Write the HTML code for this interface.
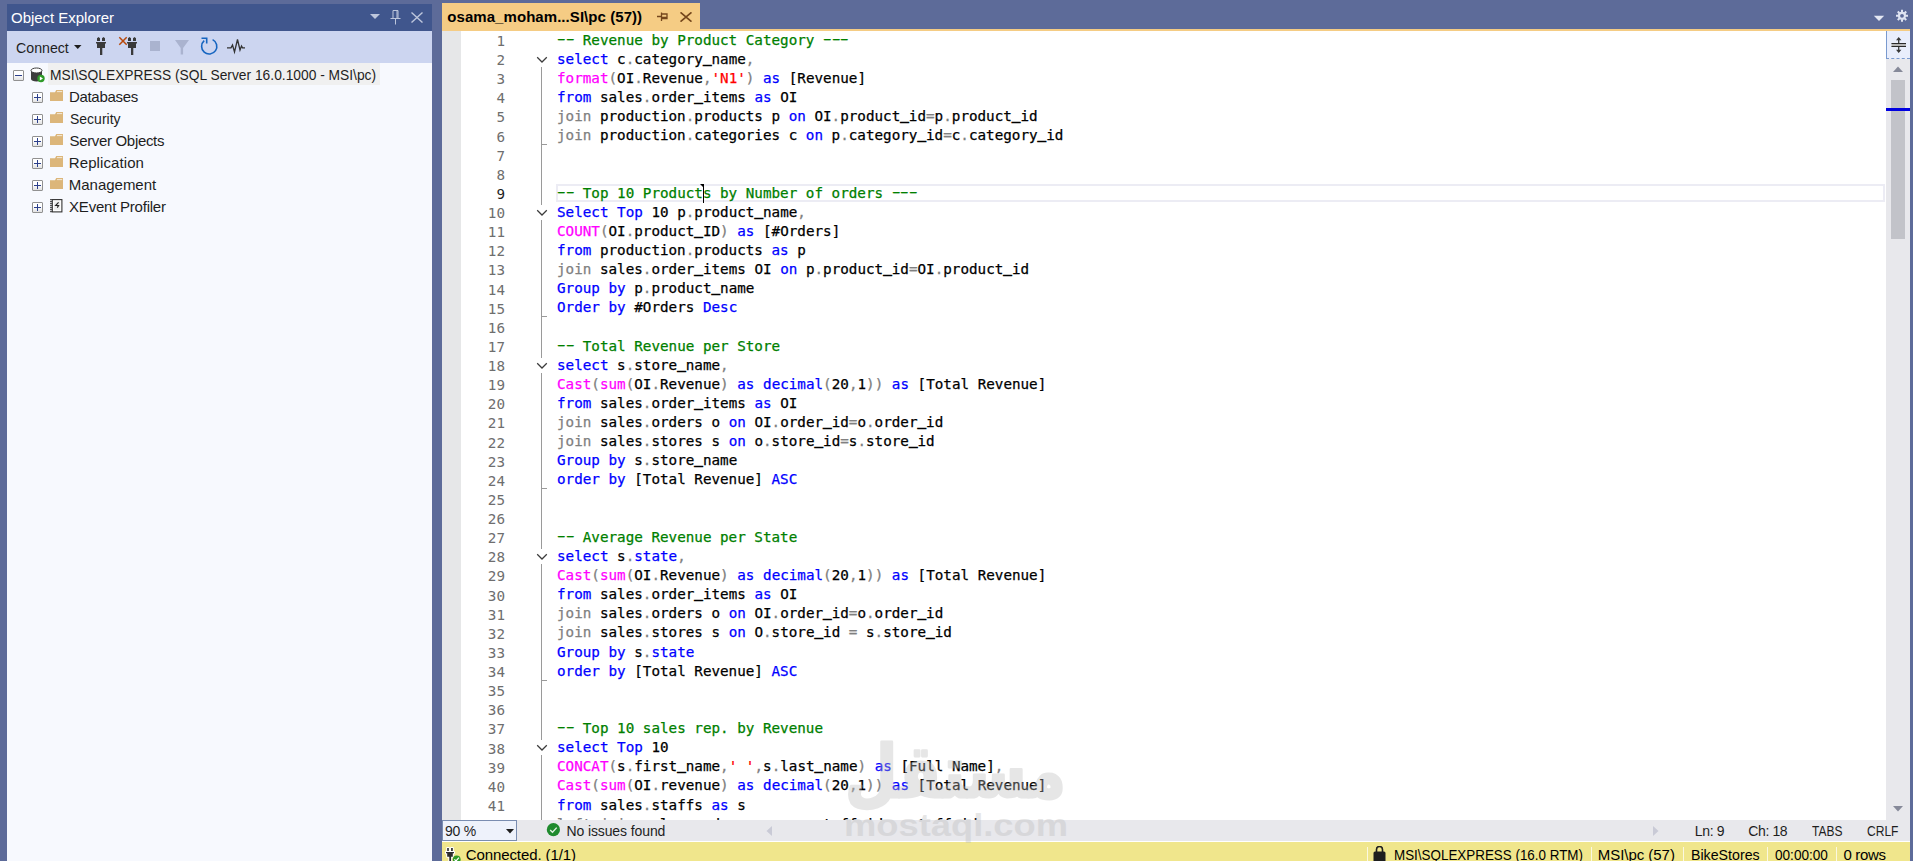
<!DOCTYPE html>
<html><head><meta charset="utf-8"><title>SQL Server Management Studio</title>
<style>
*{box-sizing:border-box;margin:0;padding:0}
html,body{width:1913px;height:861px;overflow:hidden;background:#5d6b99}
body{position:relative;font-family:"Liberation Sans",sans-serif;color:#1e1e1e}
.abs{position:absolute}
/* Object explorer */
#oe{position:absolute;left:7px;top:4px;width:425px;height:857px;background:#f7f9fe}
#oet{position:absolute;left:0;top:0;width:425px;height:27px;background:#40568d;color:#fff}
#oet .t{position:absolute;left:4px;top:4px;font-size:15px;line-height:19px;letter-spacing:-0.15px;white-space:nowrap}
#oetb{position:absolute;left:0;top:27px;width:425px;height:32px;background:#ccd5f0}
#oetb .t{position:absolute;left:9px;top:7px;font-size:15px;line-height:19px;white-space:nowrap;color:#1e1e1e}
.lb{position:absolute;white-space:nowrap;line-height:20px;height:20px;transform-origin:0 0}
.exp{position:absolute;width:11px;height:11px;border:1px solid #919191;border-radius:1px;background:linear-gradient(#fff 40%,#e2e2e2)}
.exp:before{content:"";position:absolute;left:1px;top:4px;width:7px;height:1px;background:#2b3f8c}
.exp.p:after{content:"";position:absolute;left:4px;top:1px;width:1px;height:7px;background:#2b3f8c}
.fold{position:absolute;width:13px;height:11px}
/* editor */
#tab{position:absolute;left:442px;top:3px;width:258px;height:27px;background:#f5cc84;color:#000;font-weight:bold}
#tab .t{position:absolute;left:5px;top:4px;font-size:15px;line-height:19px;white-space:nowrap}
#tabline{position:absolute;left:442px;top:29px;width:1468px;height:2px;background:#f5cc84}
#ed{position:absolute;left:442px;top:31px;width:1468px;height:789px;background:#fff;overflow:hidden}
#gut{position:absolute;left:0;top:0;width:19px;height:789px;background:#e6e7e8}
.ln,.cl{position:absolute;font-family:"DejaVu Sans Mono","Liberation Mono",monospace;font-size:14.265px;line-height:20px;height:20px;white-space:pre;letter-spacing:0px}
.ln{left:0;width:63px;text-align:right;color:#6e6e6e}
.ln.cur{color:#1e1e1e}
.cl{left:115px;color:#000;-webkit-text-stroke:0.25px}
.u{position:relative;top:-2.5px;-webkit-text-stroke:0.7px}.h{display:inline-block;position:relative;top:-1px;transform:scaleX(1.75)}
.c{color:#008000}.k{color:#0000ff}.f{color:#ff00ff}.s{color:#ff0000}.g{color:#808080}
.vl{position:absolute;left:99px;width:1px;background:#9a9a9a}
.tk{position:absolute;left:99px;width:6px;height:1px;background:#9a9a9a}
.chev{position:absolute;left:93.5px}
#curline{position:absolute;left:114px;top:153px;width:1329px;height:18px;border:2px solid #ececf4}
#caret{position:absolute;left:261px;top:155px;width:1px;height:17px;background:#000}
#sb{position:absolute;left:1444px;top:0;width:24px;height:789px;background:#e8e8ec}
#split{position:absolute;left:0;top:0;width:24px;height:28px;background:#e9eefc;border-left:1px solid #7a9acf;border-bottom:1px dashed #7a9acf}
#thumb{position:absolute;left:5px;top:49px;width:14px;height:159px;background:#c2c3c9}
#mark{position:absolute;left:0;top:77px;width:24px;height:3px;background:#0000e0}
/* bottom */
#bb{position:absolute;left:442px;top:820px;width:1468px;height:22px;background:#e8e8ec;border-bottom:1px solid #fff;font-size:14px;color:#1e1e1e}
#bb span{position:absolute;top:3px;line-height:16px;white-space:nowrap}
#zoom{position:absolute;left:0;top:0;width:75px;height:21px;border:1px solid #7a8db0;background:#eef2fb}
#st{position:absolute;left:442px;top:842px;width:1468px;height:19px;background:#f0e68c;font-size:15px;color:#000;overflow:hidden}
#st span{position:absolute;top:4px;line-height:19px;white-space:nowrap}
#st i{position:absolute;top:5px;width:1px;height:14px;background:#fbf8e0}
#wm{position:absolute;left:840px;top:735px;width:240px;height:120px;opacity:.35}
</style></head><body>

<div id="oe">
 <div id="oet"><div class="lb" style="left:4.00px;top:4px;font-size:15px;letter-spacing:-0.027px;">Object Explorer</div>
  <svg class="abs" style="left:362px;top:9px" width="12" height="8" viewBox="0 0 12 8"><path d="M1 1h10L6 6z" fill="#bdc6dc"/></svg>
  <svg class="abs" style="left:383px;top:6px" width="11" height="15" viewBox="0 0 11 15"><path d="M3 0.5h5v8h-5z M0.5 8.5h10 M5.5 9v5.5 M7 1v7" fill="none" stroke="#bdc6dc" stroke-width="1"/></svg>
  <svg class="abs" style="left:404px;top:8px" width="12" height="11" viewBox="0 0 12 11"><path d="M0.5 0.5l11 10M11.5 0.5l-11 10" fill="none" stroke="#bdc6dc" stroke-width="1.4"/></svg>
 </div>
 <div id="oetb"><div class="lb" style="left:9.20px;top:7px;font-size:15px;transform:scaleX(0.9453);">Connect</div>
  <svg class="abs" style="left:0;top:0" width="425" height="32" viewBox="7 31 425 32">
   <path d="M74 45h7.500l-3.750 4z" fill="#1e1e1e"/>
   <g transform="translate(0,0)" fill="#3a3a3a"><path d="M97 41V38.300l1.500-1.400 1.500 1.400V41z M102 41V38.300l1.500-1.400 1.500 1.400V41z"/><path d="M96 42h10v1.500h-1v4.500h-8v-4.500h-1z"/><path d="M100 48h2.300v7h-2.300z"/></g>
   <path d="M119.300 37.300l7.400 7.400M126.700 37.300l-7.400 7.400" stroke="#b8480a" stroke-width="1.500" fill="none"/>
   <g transform="translate(31,0)" fill="#3a3a3a"><path d="M97 41V38.300l1.500-1.400 1.500 1.400V41z M102 41V38.300l1.500-1.400 1.500 1.400V41z"/><path d="M96 42h10v1.500h-1v4.500h-8v-4.500h-1z"/><path d="M100 48h2.300v7h-2.300z"/></g>
   <rect x="150" y="41" width="10" height="10" fill="#aab3cf"/>
   <path d="M175 40h14l-5.900 7.900v6.600h-2.400v-6.600z" fill="#aab3cf"/>
   <path d="M212.600 39.600A7.600 7.600 0 1 1 204.200 40.700" fill="none" stroke="#1565c0" stroke-width="1.600"/>
   <path d="M201.500 38.300h5.200v5.200" fill="none" stroke="#1565c0" stroke-width="1.600"/>
   <path d="M227 47.800h4l1.500-2.800 2 7 3-12.500 2.500 10.500 1.500-4 1 1.800h2.500" fill="none" stroke="#333" stroke-width="1.300" stroke-linejoin="miter"/>
  </svg>
 </div>
 <!-- tree -->
 <div class="abs" style="left:41px;top:59px;width:332px;height:22px;background:#f0f0f0"></div>
 <div class="exp" style="left:6px;top:66px"></div>
 <svg class="abs" style="left:23px;top:62.500px" width="16" height="16" viewBox="0 0 16 16"><path d="M1 3.500v8.500c0 1.400 2.500 2.500 5.500 2.500s5.500-1.100 5.500-2.500V3.500z" fill="#3c3c3c"/><ellipse cx="6.500" cy="3.500" rx="5.500" ry="2.500" fill="#fff" stroke="#3c3c3c" stroke-width="1"/><circle cx="11" cy="11.500" r="3.700" fill="#2e9a28"/><path d="M9.800 9.600v3.800l3.200-1.900z" fill="#fff"/></svg>
 <div class="lb" style="left:42.88px;top:61px;font-size:15px;transform:scaleX(0.9197);">MSI\SQLEXPRESS (SQL Server 16.0.1000 - MSI\pc)</div>
<div class="exp p" style="left:25px;top:88px"></div>
<svg class="fold" style="left:43px;top:86px" viewBox="0 0 13 11"><path d="M0 2.200h5l1.200-2.200h6.800v11H0z" fill="#dcb67a"/><path d="M7 1.200h5.200v0.900h-5.200z" fill="#fff" opacity=".8"/></svg>
<div class="lb" style="left:61.90px;top:83px;font-size:15px;letter-spacing:-0.289px;">Databases</div>
<div class="exp p" style="left:25px;top:110px"></div>
<svg class="fold" style="left:43px;top:108px" viewBox="0 0 13 11"><path d="M0 2.200h5l1.200-2.200h6.800v11H0z" fill="#dcb67a"/><path d="M7 1.200h5.200v0.900h-5.200z" fill="#fff" opacity=".8"/></svg>
<div class="lb" style="left:62.70px;top:105px;font-size:15px;transform:scaleX(0.9326);">Security</div>
<div class="exp p" style="left:25px;top:132px"></div>
<svg class="fold" style="left:43px;top:130px" viewBox="0 0 13 11"><path d="M0 2.200h5l1.200-2.200h6.800v11H0z" fill="#dcb67a"/><path d="M7 1.200h5.200v0.900h-5.200z" fill="#fff" opacity=".8"/></svg>
<div class="lb" style="left:62.50px;top:127px;font-size:15px;letter-spacing:-0.331px;">Server Objects</div>
<div class="exp p" style="left:25px;top:154px"></div>
<svg class="fold" style="left:43px;top:152px" viewBox="0 0 13 11"><path d="M0 2.200h5l1.200-2.200h6.800v11H0z" fill="#dcb67a"/><path d="M7 1.200h5.200v0.900h-5.200z" fill="#fff" opacity=".8"/></svg>
<div class="lb" style="left:61.80px;top:149px;font-size:15px;letter-spacing:0.093px;">Replication</div>
<div class="exp p" style="left:25px;top:176px"></div>
<svg class="fold" style="left:43px;top:174px" viewBox="0 0 13 11"><path d="M0 2.200h5l1.200-2.200h6.800v11H0z" fill="#dcb67a"/><path d="M7 1.200h5.200v0.900h-5.200z" fill="#fff" opacity=".8"/></svg>
<div class="lb" style="left:61.80px;top:171px;font-size:15px;letter-spacing:-0.021px;">Management</div>
<div class="exp p" style="left:25px;top:198px"></div>
<svg class="abs" style="left:43px;top:195px" width="13" height="14" viewBox="0 0 13 14"><rect x="2.300" y="0.600" width="9.600" height="12.300" fill="#fff" stroke="#333" stroke-width="1.100"/><rect x="4" y="2.500" width="6.200" height="8.500" fill="#eee"/><path d="M0 0.7h2.200M0 2.7h2.200M0 4.7h2.200M0 6.7h2.200M0 8.7h2.200M0 10.7h2.200M0 12.7h2.200" stroke="#333" stroke-width="1"/><path d="M8.600 3.300L5.600 6.500h3L7.300 8.600" fill="none" stroke="#222" stroke-width="1.100"/></svg>
<div class="lb" style="left:62.10px;top:193px;font-size:15px;letter-spacing:-0.225px;">XEvent Profiler</div>
</div>

<div id="tab"><div class="lb" style="left:5.30px;top:4px;font-size:15px;letter-spacing:0.058px;font-weight:bold;">osama_moham...SI\pc (57))</div>
 <svg class="abs" style="left:215px;top:9px" width="11" height="10" viewBox="0 0 11 10"><path d="M0 4.500h4.500 M4.500 0.500v8.500 M4.500 2h5.500v4.500h-5.500 M4.500 5.500h5.500" fill="none" stroke="#75471c" stroke-width="1.300"/></svg>
 <svg class="abs" style="left:238px;top:9px" width="12" height="10" viewBox="0 0 12 10"><path d="M0.500 0.300l11 9.400M11.500 0.300l-11 9.400" fill="none" stroke="#75471c" stroke-width="1.600"/></svg>
</div>
<svg class="abs" style="left:1873px;top:15px" width="12" height="7" viewBox="0 0 12 7"><path d="M0.800 0.800h10.400L6 6z" fill="#e4e8f3"/></svg>
<svg class="abs" style="left:1895px;top:9px" width="14" height="14" viewBox="0 0 14 14"><g fill="none" stroke="#dfe4f2"><circle cx="7" cy="6.800" r="3" stroke-width="2.200"/><path d="M7 0.800v2.400M7 10.400v2.400M1 6.800h2.400M10.600 6.800h2.400M2.750 2.550l1.700 1.700M9.550 9.350l1.700 1.700M2.750 11.050l1.700-1.700M9.550 4.250l1.700-1.700" stroke-width="2"/></g></svg>
<div id="tabline"></div>

<div id="ed">
 <div id="gut"></div>
 <div id="curline"></div>
<div class="ln" style="top:0px">1</div>
<div class="ln" style="top:19px">2</div>
<div class="ln" style="top:38px">3</div>
<div class="ln" style="top:57px">4</div>
<div class="ln" style="top:76px">5</div>
<div class="ln" style="top:96px">6</div>
<div class="ln" style="top:115px">7</div>
<div class="ln" style="top:134px">8</div>
<div class="ln cur" style="top:153px">9</div>
<div class="ln" style="top:172px">10</div>
<div class="ln" style="top:191px">11</div>
<div class="ln" style="top:210px">12</div>
<div class="ln" style="top:229px">13</div>
<div class="ln" style="top:249px">14</div>
<div class="ln" style="top:268px">15</div>
<div class="ln" style="top:287px">16</div>
<div class="ln" style="top:306px">17</div>
<div class="ln" style="top:325px">18</div>
<div class="ln" style="top:344px">19</div>
<div class="ln" style="top:363px">20</div>
<div class="ln" style="top:382px">21</div>
<div class="ln" style="top:402px">22</div>
<div class="ln" style="top:421px">23</div>
<div class="ln" style="top:440px">24</div>
<div class="ln" style="top:459px">25</div>
<div class="ln" style="top:478px">26</div>
<div class="ln" style="top:497px">27</div>
<div class="ln" style="top:516px">28</div>
<div class="ln" style="top:535px">29</div>
<div class="ln" style="top:555px">30</div>
<div class="ln" style="top:574px">31</div>
<div class="ln" style="top:593px">32</div>
<div class="ln" style="top:612px">33</div>
<div class="ln" style="top:631px">34</div>
<div class="ln" style="top:650px">35</div>
<div class="ln" style="top:669px">36</div>
<div class="ln" style="top:688px">37</div>
<div class="ln" style="top:708px">38</div>
<div class="ln" style="top:727px">39</div>
<div class="ln" style="top:746px">40</div>
<div class="ln" style="top:765px">41</div>
<div class="ln" style="top:784px">42</div>
<div class="vl" style="top:36px;height:138px"></div>
<div class="vl" style="top:189px;height:138px"></div>
<div class="vl" style="top:342px;height:176px"></div>
<div class="vl" style="top:533px;height:176px"></div>
<div class="vl" style="top:724px;height:65px"></div>
<div class="tk" style="top:113px"></div>
<div class="tk" style="top:285px"></div>
<div class="tk" style="top:457px"></div>
<div class="tk" style="top:649px"></div>
<svg class="chev" style="top:25px" width="12" height="8" viewBox="0 0 12 8"><path d="M1.2 1.2 L6 6 L10.8 1.2" fill="none" stroke="#3b3b3b" stroke-width="1.25"/></svg>
<svg class="chev" style="top:178px" width="12" height="8" viewBox="0 0 12 8"><path d="M1.2 1.2 L6 6 L10.8 1.2" fill="none" stroke="#3b3b3b" stroke-width="1.25"/></svg>
<svg class="chev" style="top:331px" width="12" height="8" viewBox="0 0 12 8"><path d="M1.2 1.2 L6 6 L10.8 1.2" fill="none" stroke="#3b3b3b" stroke-width="1.25"/></svg>
<svg class="chev" style="top:522px" width="12" height="8" viewBox="0 0 12 8"><path d="M1.2 1.2 L6 6 L10.8 1.2" fill="none" stroke="#3b3b3b" stroke-width="1.25"/></svg>
<svg class="chev" style="top:713px" width="12" height="8" viewBox="0 0 12 8"><path d="M1.2 1.2 L6 6 L10.8 1.2" fill="none" stroke="#3b3b3b" stroke-width="1.25"/></svg>
<div class="cl" style="top:-1px"><span class="c"><span class="h">-</span><span class="h">-</span> Revenue by Product Category <span class="h">-</span><span class="h">-</span><span class="h">-</span></span></div>
<div class="cl" style="top:18px"><span class="k">select</span> c<span class="g">.</span>category<span class="u">_</span>name<span class="g">,</span></div>
<div class="cl" style="top:37px"><span class="f">format</span><span class="g">(</span>OI<span class="g">.</span>Revenue<span class="g">,</span><span class="s">&#x27;N1&#x27;</span><span class="g">)</span> <span class="k">as</span> [Revenue]</div>
<div class="cl" style="top:56px"><span class="k">from</span> sales<span class="g">.</span>order<span class="u">_</span>items <span class="k">as</span> OI</div>
<div class="cl" style="top:75px"><span class="g">join</span> production<span class="g">.</span>products p <span class="k">on</span> OI<span class="g">.</span>product<span class="u">_</span>id<span class="g">=</span>p<span class="g">.</span>product<span class="u">_</span>id</div>
<div class="cl" style="top:94px"><span class="g">join</span> production<span class="g">.</span>categories c <span class="k">on</span> p<span class="g">.</span>category<span class="u">_</span>id<span class="g">=</span>c<span class="g">.</span>category<span class="u">_</span>id</div>
<div class="cl" style="top:152px"><span class="c"><span class="h">-</span><span class="h">-</span> Top 10 Products by Number of orders <span class="h">-</span><span class="h">-</span><span class="h">-</span></span></div>
<div class="cl" style="top:171px"><span class="k">Select</span> <span class="k">Top</span> 10 p<span class="g">.</span>product<span class="u">_</span>name<span class="g">,</span></div>
<div class="cl" style="top:190px"><span class="f">COUNT</span><span class="g">(</span>OI<span class="g">.</span>product<span class="u">_</span>ID<span class="g">)</span> <span class="k">as</span> [#Orders]</div>
<div class="cl" style="top:209px"><span class="k">from</span> production<span class="g">.</span>products <span class="k">as</span> p</div>
<div class="cl" style="top:228px"><span class="g">join</span> sales<span class="g">.</span>order<span class="u">_</span>items OI <span class="k">on</span> p<span class="g">.</span>product<span class="u">_</span>id<span class="g">=</span>OI<span class="g">.</span>product<span class="u">_</span>id</div>
<div class="cl" style="top:247px"><span class="k">Group</span> <span class="k">by</span> p<span class="g">.</span>product<span class="u">_</span>name</div>
<div class="cl" style="top:266px"><span class="k">Order</span> <span class="k">by</span> #Orders <span class="k">Desc</span></div>
<div class="cl" style="top:305px"><span class="c"><span class="h">-</span><span class="h">-</span> Total Revenue per Store</span></div>
<div class="cl" style="top:324px"><span class="k">select</span> s<span class="g">.</span>store<span class="u">_</span>name<span class="g">,</span></div>
<div class="cl" style="top:343px"><span class="f">Cast</span><span class="g">(</span><span class="f">sum</span><span class="g">(</span>OI<span class="g">.</span>Revenue<span class="g">)</span> <span class="k">as</span> <span class="k">decimal</span><span class="g">(</span>20<span class="g">,</span>1<span class="g">)</span><span class="g">)</span> <span class="k">as</span> [Total Revenue]</div>
<div class="cl" style="top:362px"><span class="k">from</span> sales<span class="g">.</span>order<span class="u">_</span>items <span class="k">as</span> OI</div>
<div class="cl" style="top:381px"><span class="g">join</span> sales<span class="g">.</span>orders o <span class="k">on</span> OI<span class="g">.</span>order<span class="u">_</span>id<span class="g">=</span>o<span class="g">.</span>order<span class="u">_</span>id</div>
<div class="cl" style="top:400px"><span class="g">join</span> sales<span class="g">.</span>stores s <span class="k">on</span> o<span class="g">.</span>store<span class="u">_</span>id<span class="g">=</span>s<span class="g">.</span>store<span class="u">_</span>id</div>
<div class="cl" style="top:419px"><span class="k">Group</span> <span class="k">by</span> s<span class="g">.</span>store<span class="u">_</span>name</div>
<div class="cl" style="top:438px"><span class="k">order</span> <span class="k">by</span> [Total Revenue] <span class="k">ASC</span></div>
<div class="cl" style="top:496px"><span class="c"><span class="h">-</span><span class="h">-</span> Average Revenue per State</span></div>
<div class="cl" style="top:515px"><span class="k">select</span> s<span class="g">.</span><span class="k">state</span><span class="g">,</span></div>
<div class="cl" style="top:534px"><span class="f">Cast</span><span class="g">(</span><span class="f">sum</span><span class="g">(</span>OI<span class="g">.</span>Revenue<span class="g">)</span> <span class="k">as</span> <span class="k">decimal</span><span class="g">(</span>20<span class="g">,</span>1<span class="g">)</span><span class="g">)</span> <span class="k">as</span> [Total Revenue]</div>
<div class="cl" style="top:553px"><span class="k">from</span> sales<span class="g">.</span>order<span class="u">_</span>items <span class="k">as</span> OI</div>
<div class="cl" style="top:572px"><span class="g">join</span> sales<span class="g">.</span>orders o <span class="k">on</span> OI<span class="g">.</span>order<span class="u">_</span>id<span class="g">=</span>o<span class="g">.</span>order<span class="u">_</span>id</div>
<div class="cl" style="top:591px"><span class="g">join</span> sales<span class="g">.</span>stores s <span class="k">on</span> O<span class="g">.</span>store<span class="u">_</span>id <span class="g">=</span> s<span class="g">.</span>store<span class="u">_</span>id</div>
<div class="cl" style="top:611px"><span class="k">Group</span> <span class="k">by</span> s<span class="g">.</span><span class="k">state</span></div>
<div class="cl" style="top:630px"><span class="k">order</span> <span class="k">by</span> [Total Revenue] <span class="k">ASC</span></div>
<div class="cl" style="top:687px"><span class="c"><span class="h">-</span><span class="h">-</span> Top 10 sales rep. by Revenue</span></div>
<div class="cl" style="top:706px"><span class="k">select</span> <span class="k">Top</span> 10</div>
<div class="cl" style="top:725px"><span class="f">CONCAT</span><span class="g">(</span>s<span class="g">.</span>first<span class="u">_</span>name<span class="g">,</span><span class="s">&#x27; &#x27;</span><span class="g">,</span>s<span class="g">.</span>last<span class="u">_</span>name<span class="g">)</span> <span class="k">as</span> [Full Name]<span class="g">,</span></div>
<div class="cl" style="top:744px"><span class="f">Cast</span><span class="g">(</span><span class="f">sum</span><span class="g">(</span>OI<span class="g">.</span>revenue<span class="g">)</span> <span class="k">as</span> <span class="k">decimal</span><span class="g">(</span>20<span class="g">,</span>1<span class="g">)</span><span class="g">)</span> <span class="k">as</span> [Total Revenue]</div>
<div class="cl" style="top:764px"><span class="k">from</span> sales<span class="g">.</span>staffs <span class="k">as</span> s</div>
<div class="cl" style="top:783px"><span class="g">left</span> <span class="g">join</span> sales<span class="g">.</span>orders o <span class="k">on</span> s<span class="g">.</span>staff<span class="u">_</span>id<span class="g">=</span>o<span class="g">.</span>staff<span class="u">_</span>id</div>
 <div id="caret"></div><svg class="abs" style="left:258px;top:153px" width="4" height="4" viewBox="0 0 4 4"><path d="M0 0h4v4z" fill="#000"/></svg>
 <div id="sb">
  <div id="split"><svg class="abs" style="left:4px;top:5px" width="16" height="18" viewBox="0 0 16 18"><rect x="0.500" y="7" width="14.500" height="4" fill="#b5b5b5"/><path d="M0.500 7.500h14.500M0.500 10.500h14.500" stroke="#2b2b2b" stroke-width="1.100"/><path d="M7.700 2v5M7.700 11v5" stroke="#3a3a3a" stroke-width="1.300"/><path d="M5 4.300L7.700 1 10.400 4.300zM5 13.700L7.700 17 10.400 13.700z" fill="#3a3a3a"/></svg></div>
  <svg class="abs" style="left:7px;top:35px" width="10" height="6" viewBox="0 0 10 6"><path d="M0 6h10L5 0.500z" fill="#868999"/></svg>
  <div id="thumb"></div>
  <div id="mark"></div>
  <svg class="abs" style="left:7px;top:775px" width="10" height="6" viewBox="0 0 10 6"><path d="M0 0h10L5 5.500z" fill="#868999"/></svg>
 </div>
</div>

<div id="bb">
 <div id="zoom"><div class="lb" style="left:2.00px;top:0px;font-size:14px;letter-spacing:-0.221px;">90 %</div><svg class="abs" style="left:63px;top:8px" width="8" height="5" viewBox="0 0 8 5"><path d="M0 0h8L4 4.500z" fill="#1e1e1e"/></svg></div>
 <svg class="abs" style="left:104px;top:2px" width="15" height="15" viewBox="0 0 15 15"><circle cx="7.400" cy="7.700" r="6.600" fill="#1f8a2e"/><path d="M4.200 8l2.300 2.300 4.200-4.700" fill="none" stroke="#e2f0e2" stroke-width="1.400"/></svg>
 <div class="lb" style="left:124.40px;top:1px;font-size:14px;letter-spacing:-0.1px;">No issues found</div>
 <svg class="abs" style="left:324px;top:6px" width="6" height="10" viewBox="0 0 6 10"><path d="M6 0v10L0.500 5z" fill="#c9cad6"/></svg>
 <svg class="abs" style="left:1211px;top:6px" width="6" height="10" viewBox="0 0 6 10"><path d="M0 0v10L5.500 5z" fill="#c9cad6"/></svg>
 <div class="lb" style="left:1252.80px;top:1px;font-size:14px;letter-spacing:-0.338px;">Ln: 9</div>
 <div class="lb" style="left:1306.30px;top:1px;font-size:14px;letter-spacing:-0.392px;">Ch: 18</div>
 <div class="lb" style="left:1370.10px;top:1px;font-size:14px;transform:scaleX(0.8554);">TABS</div>
 <div class="lb" style="left:1425.00px;top:1px;font-size:14px;transform:scaleX(0.8609);">CRLF</div>
</div>

<div id="st">
 <svg class="abs" style="left:0;top:0" width="24" height="19" viewBox="442 842 24 19"><g stroke="#fff" stroke-width="2" stroke-linejoin="round" fill="#fff"><path d="M447.200 848h1.600v3h-1.600zM451.100 848h1.700v3h-1.700zM446 852h8v1.300h-1.200v3.500h-5.600v-3.500H446zM449.300 856.800h1.800v4.200h-1.800z"/></g><path d="M447.200 848h1.600v3h-1.600zM451.100 848h1.700v3h-1.700zM446 852h8v1.300h-1.200v3.500h-5.600v-3.500H446zM449.300 856.800h1.800v4.200h-1.800z" fill="#2b2b2b"/><circle cx="456.700" cy="859.300" r="3.900" fill="#2f9a27"/><path d="M454.400 859.300l1.600 1.600 3-3.300" fill="none" stroke="#fff" stroke-width="1.200"/></svg>
 <div class="lb" style="left:23.70px;top:3px;font-size:15px;letter-spacing:-0.089px;">Connected. (1/1)</div>
 <i style="left:925px"></i>
 <svg class="abs" style="left:931px;top:4px" width="13" height="16" viewBox="0 0 13 16"><path d="M3.500 6V3.500a3 3 0 0 1 6 0V6" fill="none" stroke="#1e1e1e" stroke-width="1.600"/><rect x="0.500" y="5.500" width="12" height="10.500" rx="1.500" fill="#1e1e1e"/></svg>
 <div class="lb" style="left:951.51px;top:3px;font-size:15px;transform:scaleX(0.8938);">MSI\SQLEXPRESS (16.0 RTM)</div>
 <i style="left:1149px"></i>
 <div class="lb" style="left:1155.80px;top:3px;font-size:15px;letter-spacing:-0.042px;">MSI\pc (57)</div>
 <i style="left:1241px"></i>
 <div class="lb" style="left:1248.55px;top:3px;font-size:15px;transform:scaleX(0.9461);">BikeStores</div>
 <i style="left:1325px"></i>
 <div class="lb" style="left:1332.60px;top:3px;font-size:15px;transform:scaleX(0.9062);">00:00:00</div>
 <i style="left:1394px"></i>
 <div class="lb" style="left:1401.40px;top:3px;font-size:15px;letter-spacing:-0.316px;">0 rows</div>
</div>

<div id="wm">
 <svg width="240" height="120" viewBox="0 0 240 120"><g transform="translate(0,-13.400) scale(1,1.140)"><text x="5" y="66" textLength="221" lengthAdjust="spacingAndGlyphs" font-family="'DejaVu Sans',sans-serif" font-weight="bold" font-size="64" fill="#b9b9b9" stroke="#b9b9b9" stroke-width="2.500" stroke-linejoin="round">مستقل</text></g><text x="4" y="101" textLength="224" lengthAdjust="spacingAndGlyphs" font-family="'Liberation Sans',sans-serif" font-weight="bold" font-size="31" fill="#b9b9b9">mostaql.com</text></svg>
</div>
</body></html>
